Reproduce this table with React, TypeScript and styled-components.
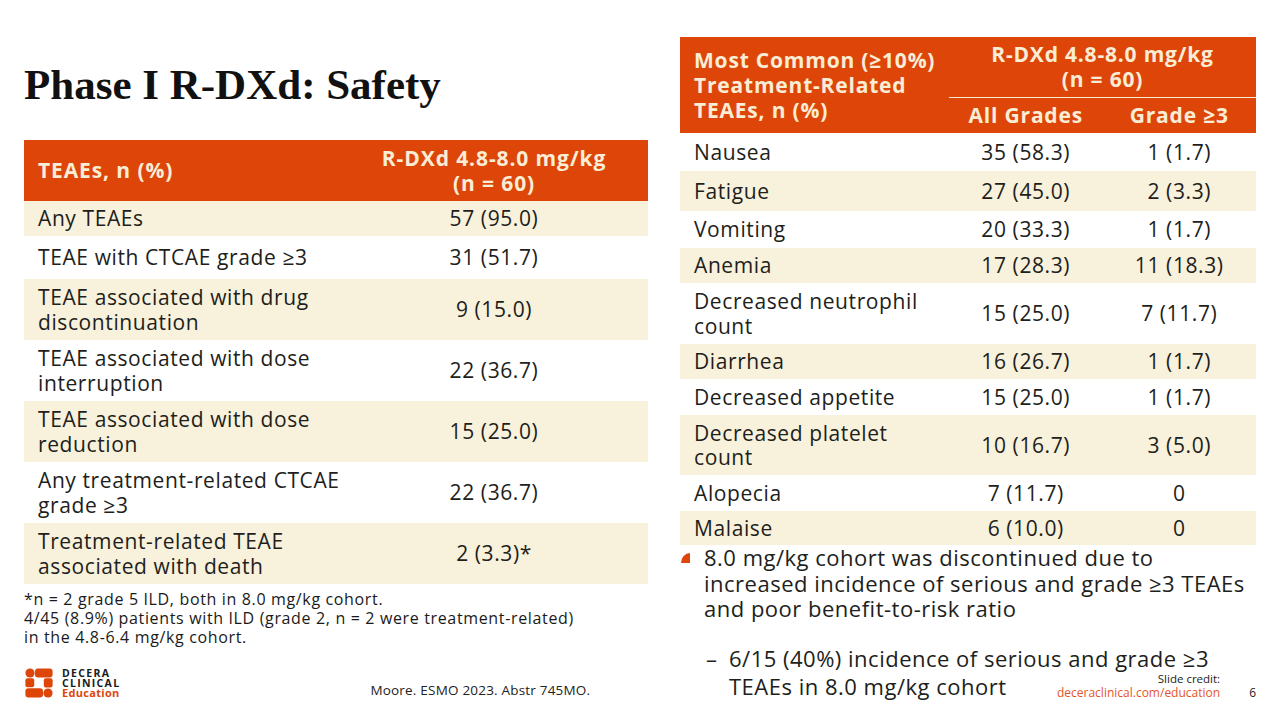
import React from 'react';
import styled, { createGlobalStyle } from 'styled-components';

const ORANGE = '#DE4609';
const CREAM = '#F9EDD6';
const BEIGE = '#F8F1DC';
const INK = '#211E1B';

const GlobalStyle = createGlobalStyle`
  html, body {
    margin: 0;
    padding: 0;
    background: #ffffff;
  }
`;

const Slide = styled.div`
  width: 1280px;
  height: 720px;
  box-sizing: border-box;
  position: relative;
  overflow: hidden;
  background: #ffffff;
  padding: 0 24px;
  display: grid;
  grid-template-columns: 624px 576px;
  column-gap: 32px;
  font-family: 'Open Sans', 'Noto Sans', sans-serif;
  color: ${INK};
`;

const LeftCol = styled.div`
  display: flex;
  flex-direction: column;
`;

const RightCol = styled.div`
  display: flex;
  flex-direction: column;
  padding-top: 37px;
`;

const Title = styled.h1`
  margin: 0;
  padding-top: 61px;
  font-family: 'Liberation Serif', 'Times New Roman', serif;
  font-weight: 700;
  font-size: 43px;
  line-height: 48px;
  color: #111111;
`;

/* left table */
const TeaeTable = styled.div`
  margin-top: 31px;
  display: flex;
  flex-direction: column;
`;

const TeaeHead = styled.div`
  display: grid;
  grid-template-columns: 316px 1fr;
  align-items: center;
  height: 61px;
  background: ${ORANGE};
  color: ${CREAM};
  font-weight: 700;
  font-size: 21px;
  line-height: 25px;
  letter-spacing: 0.9px;
`;

const HeadLabel = styled.div`
  padding-left: 14px;
`;

const HeadCenter = styled.div`
  text-align: center;
`;

const TeaeRow = styled.div<{ h: number; shade: boolean }>`
  display: grid;
  grid-template-columns: 316px 1fr;
  align-items: center;
  height: ${(p) => p.h}px;
  background: ${(p) => (p.shade ? BEIGE : '#ffffff')};
  font-size: 21px;
  line-height: 24.5px;
  letter-spacing: 0.6px;
`;

const Label = styled.div`
  padding-left: 14px;
`;

const Value = styled.div`
  text-align: center;
`;

const Footnote = styled.div`
  margin-top: 6px;
  font-size: 16px;
  line-height: 19px;
  letter-spacing: 0.65px;
  color: #1a1a1a;
`;

const Footer = styled.div`
  margin-top: auto;
  padding-bottom: 22px;
  display: flex;
  align-items: flex-end;
`;

const Logo = styled.div`
  display: flex;
  align-items: center;
  gap: 9px;
  margin-left: 1px;
`;

const LogoText = styled.div`
  display: flex;
  flex-direction: column;
  font-family: 'Open Sans', sans-serif;
  font-weight: 700;
  font-size: 10.5px;
  line-height: 10px;
  letter-spacing: 1.3px;
  color: #1b1b1b;
`;

const LogoEdu = styled.span`
  color: ${ORANGE};
  letter-spacing: 0.3px;
  font-size: 11px;
`;

const Citation = styled.div`
  margin-left: 250px;
  font-size: 13.5px;
  line-height: 16px;
  letter-spacing: 0.2px;
  color: #222;
`;

/* right table */
const AeTable = styled.div`
  display: flex;
  flex-direction: column;
`;

const AeHead = styled.div`
  display: grid;
  grid-template-columns: 269px 1fr 1fr;
  grid-template-rows: 61px 35px;
  background: ${ORANGE};
  color: ${CREAM};
  font-weight: 700;
  font-size: 21px;
  line-height: 25px;
  letter-spacing: 0.8px;
`;

const AeHeadLabel = styled.div`
  grid-row: 1 / span 2;
  display: flex;
  align-items: center;
  padding-left: 14px;
`;

const AeHeadGroup = styled.div`
  grid-column: 2 / span 2;
  display: flex;
  align-items: center;
  justify-content: center;
  text-align: center;
  border-bottom: 1.5px solid ${CREAM};
`;

const AeHeadSub = styled.div`
  display: flex;
  align-items: center;
  justify-content: center;
`;

const AeRow = styled.div<{ h: number; shade: boolean }>`
  display: grid;
  grid-template-columns: 269px 1fr 1fr;
  align-items: center;
  height: ${(p) => p.h}px;
  background: ${(p) => (p.shade ? BEIGE : '#ffffff')};
  font-size: 21px;
  line-height: 24.5px;
  letter-spacing: 0.6px;
`;

/* bullets */
const Bullets = styled.div`
  padding-left: 24px;
`;

const Bullet = styled.div`
  position: relative;
  font-size: 22px;
  line-height: 25.5px;
  letter-spacing: 0.5px;
  white-space: nowrap;
  color: ${INK};
`;

const Marker = styled.span`
  position: absolute;
  left: -23px;
  top: 8px;
  width: 9px;
  height: 10px;
  background: ${ORANGE};
  border-top-left-radius: 100% 100%;
`;

const SubBullet = styled.div`
  position: relative;
  margin-top: 22px;
  padding-left: 25px;
  font-size: 22px;
  line-height: 28px;
  letter-spacing: 0.5px;
  white-space: nowrap;
  color: ${INK};
`;

const Dash = styled.span`
  position: absolute;
  left: 2px;
  top: 0;
`;

const Credit = styled.div`
  position: absolute;
  right: 24px;
  bottom: 19px;
  display: flex;
  align-items: flex-end;
  gap: 29px;
`;

const CreditText = styled.div`
  display: flex;
  flex-direction: column;
  align-items: flex-end;
`;

const CreditLabel = styled.span`
  font-size: 11.5px;
  line-height: 13px;
  color: #222;
`;

const CreditLink = styled.span`
  font-size: 12px;
  line-height: 16px;
  color: #E4561F;
`;

const PageNo = styled.span`
  font-size: 12px;
  line-height: 16px;
  color: #222;
`;

const teaes = [
  { label: 'Any TEAEs', value: '57 (95.0)', h: 35 },
  { label: 'TEAE with CTCAE grade ≥3', value: '31 (51.7)', h: 43 },
  { label: 'TEAE associated with drug discontinuation', value: '9 (15.0)', h: 61 },
  { label: 'TEAE associated with dose interruption', value: '22 (36.7)', h: 61 },
  { label: 'TEAE associated with dose reduction', value: '15 (25.0)', h: 61 },
  { label: 'Any treatment-related CTCAE grade ≥3', value: '22 (36.7)', h: 61 },
  { label: 'Treatment-related TEAE associated with death', value: '2 (3.3)*', h: 61 },
];

const aes = [
  { label: 'Nausea', all: '35 (58.3)', g3: '1 (1.7)', h: 38 },
  { label: 'Fatigue', all: '27 (45.0)', g3: '2 (3.3)', h: 40 },
  { label: 'Vomiting', all: '20 (33.3)', g3: '1 (1.7)', h: 37 },
  { label: 'Anemia', all: '17 (28.3)', g3: '11 (18.3)', h: 35 },
  { label: 'Decreased neutrophil count', all: '15 (25.0)', g3: '7 (11.7)', h: 61 },
  { label: 'Diarrhea', all: '16 (26.7)', g3: '1 (1.7)', h: 35 },
  { label: 'Decreased appetite', all: '15 (25.0)', g3: '1 (1.7)', h: 36 },
  { label: 'Decreased platelet count', all: '10 (16.7)', g3: '3 (5.0)', h: 60 },
  { label: 'Alopecia', all: '7 (11.7)', g3: '0', h: 36 },
  { label: 'Malaise', all: '6 (10.0)', g3: '0', h: 34 },
];

function LogoMark() {
  return (
    <svg width="28" height="30" viewBox="0 0 28 30">
      <g fill={ORANGE}>
        <circle cx="5" cy="5" r="4.6" />
        <rect x="10" y="0.6" width="17.6" height="8.8" rx="3" />
        <rect x="0.4" y="10.2" width="8.8" height="9" rx="2" />
        <rect x="18.8" y="10.2" width="8.8" height="9.4" rx="2" />
        <rect x="0.4" y="20.2" width="17.6" height="9.2" rx="3" />
        <circle cx="23" cy="25" r="4.6" />
      </g>
    </svg>
  );
}

export default function App() {
  return (
    <>
      <GlobalStyle />
      <Slide>
        <LeftCol>
          <Title>Phase I R-DXd: Safety</Title>
          <TeaeTable>
            <TeaeHead>
              <HeadLabel>TEAEs, n (%)</HeadLabel>
              <HeadCenter>
                R-DXd 4.8-8.0 mg/kg
                <br />
                (n = 60)
              </HeadCenter>
            </TeaeHead>
            {teaes.map((r, i) => (
              <TeaeRow key={r.label} h={r.h} shade={i % 2 === 0}>
                <Label>{r.label}</Label>
                <Value>{r.value}</Value>
              </TeaeRow>
            ))}
          </TeaeTable>
          <Footnote>
            *n = 2 grade 5 ILD, both in 8.0 mg/kg cohort.
            <br />
            4/45 (8.9%) patients with ILD (grade 2, n = 2 were treatment-related)
            <br />
            in the 4.8-6.4 mg/kg cohort.
          </Footnote>
          <Footer>
            <Logo>
              <LogoMark />
              <LogoText>
                <span>DECERA</span>
                <span>CLINICAL</span>
                <LogoEdu>Education</LogoEdu>
              </LogoText>
            </Logo>
            <Citation>Moore. ESMO 2023. Abstr 745MO.</Citation>
          </Footer>
        </LeftCol>

        <RightCol>
          <AeTable>
            <AeHead>
              <AeHeadLabel>
                Most Common (≥10%)
                <br />
                Treatment-Related
                <br />
                TEAEs, n (%)
              </AeHeadLabel>
              <AeHeadGroup>
                R-DXd 4.8-8.0 mg/kg
                <br />
                (n = 60)
              </AeHeadGroup>
              <AeHeadSub>All Grades</AeHeadSub>
              <AeHeadSub>Grade ≥3</AeHeadSub>
            </AeHead>
            {aes.map((r, i) => (
              <AeRow key={r.label} h={r.h} shade={i % 2 === 1}>
                <Label>{r.label}</Label>
                <Value>{r.all}</Value>
                <Value>{r.g3}</Value>
              </AeRow>
            ))}
          </AeTable>
          <Bullets>
            <Bullet>
              <Marker />
              8.0 mg/kg cohort was discontinued due to
              <br />
              increased incidence of serious and grade ≥3 TEAEs
              <br />
              and poor benefit-to-risk ratio
            </Bullet>
            <SubBullet>
              <Dash>–</Dash>
              6/15 (40%) incidence of serious and grade ≥3
              <br />
              TEAEs in 8.0 mg/kg cohort
            </SubBullet>
          </Bullets>
        </RightCol>

        <Credit>
          <CreditText>
            <CreditLabel>Slide credit:</CreditLabel>
            <CreditLink>deceraclinical.com/education</CreditLink>
          </CreditText>
          <PageNo>6</PageNo>
        </Credit>
      </Slide>
    </>
  );
}
